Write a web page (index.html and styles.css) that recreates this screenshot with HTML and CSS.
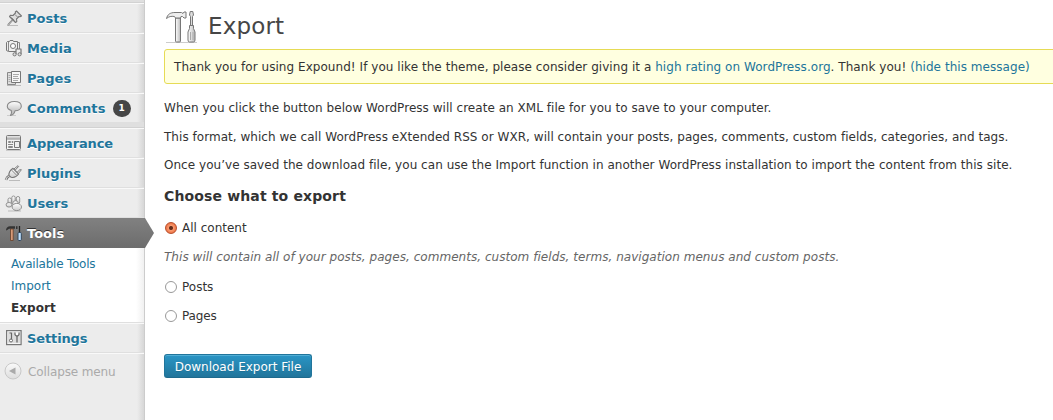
FILE: index.html
```html
<!DOCTYPE html>
<html lang="en">
<head>
<meta charset="utf-8">
<title>Export</title>
<link rel="stylesheet" href="styles.css">
</head>
<body>
<div class="admin">
  <nav class="sidebar">
    <div class="separator first"></div>
    <a class="item"><svg class="icon" viewBox="0 0 20 20"><path d="M3 17.500h11" stroke="#bbb"/><path d="M8.500 12 4 17" stroke="#777" stroke-width="1.800"/><path d="M8.500 12 4 17" stroke="#ddd" stroke-width=".6"/><path d="m12.500 3 5 5-1.500.8-1-.3-2.500 2.500.3 2.500-1.300 1L5.500 8.500l1-1.300 2.500.3 2.500-2.500-.2-1z" fill="#ddd" stroke="#777" stroke-width="1.100"/><path d="m11 6.500 3 3M7.500 9.500l3 3" stroke="#888"/></svg><span>Posts</span></a>
    <a class="item"><svg class="icon" viewBox="0 0 20 20"><path d="M2.500 4.500v8l2 1h9v-10h-4l-.5-1H6l-.500 1h-2z" fill="#eee" stroke="#777"/><path d="M4.500 4v9" stroke="#888"/><path d="M13.500 4.500h2v9" fill="none" stroke="#888"/><circle cx="9" cy="8" r="2.500" fill="#fff" stroke="#777"/><path d="M12 16v-5h5v5" fill="#eee" stroke="#777" stroke-width="1.200"/><circle cx="10.600" cy="16.300" r="1.600" fill="#ddd" stroke="#777"/><circle cx="15.600" cy="16.300" r="1.600" fill="#ddd" stroke="#777"/></svg><span class="wide">Media</span></a>
    <a class="item"><svg class="icon" viewBox="0 0 20 20"><path d="M3 17.500h14" stroke="#bbb"/><path d="M3.500 4.500h8v12h-8z" fill="#ddd" stroke="#888"/><path d="M4.500 7.500h2m-2 2h2m-2 2h2m-2 2h2" stroke="#aaa"/><path d="M7.500 3.500h9v11h-9z" fill="#f7f7f7" stroke="#777"/><path d="M9 6.500h6M9 8.500h5m-5 2h6m-6 2h5" stroke="#aaa"/></svg><span class="wide">Pages</span></a>
    <a class="item"><svg class="icon" viewBox="0 0 20 20"><path d="M3 17.500h9" stroke="#ccc"/><path d="M10.300 3.500c4 0 7 1.800 7 4.700s-3 4.600-6.300 4.600c-.5 2.300-2 4-4.500 4.700 1-1.500 1.400-3 .8-5-2.500-.8-4-2.400-4-4.300 0-2.900 3-4.700 7-4.700z" fill="url(#bubble)" stroke="#888" stroke-width="1.100"/></svg><span class="wide">Comments</span><b class="badge">1</b></a>
    <div class="separator"></div>
    <a class="item"><svg class="icon" viewBox="0 0 20 20"><rect x="2.500" y="2.500" width="14" height="14" rx="1" fill="#f4f4f4" stroke="#777"/><path d="M3 4.500h13" stroke="#ccc" stroke-width="2"/><path d="M3 6h13" stroke="#888"/><path d="M10.500 8.500h5v6h-5z" fill="#eee" stroke="#777"/><path d="M4.500 8.500h2v1h-2zm3.500 0h1v1H8zM4 11.500h5M4.500 13.500h4v1h-4z" fill="none" stroke="#888"/><path d="M2 17.500h15" stroke="#ccc"/></svg><span class="narrow">Appearance</span></a>
    <a class="item"><svg class="icon" viewBox="0 0 20 20"><path d="M5 17.500h11" stroke="#bbb"/><path d="M2 17c.5-2 1-3 3-4" fill="none" stroke="#777" stroke-width="2.600"/><path d="M2 17c.5-2 1-3 3-4" fill="none" stroke="#eee"/><path d="m10 6 4-3.300.6.800-3.300 3.500M13 9.500l3.500-3.500.8.900-3.300 4" fill="#fff" stroke="#777"/><path d="M9 5.300 14.700 11c-2 2.500-4.500 4-7.500 3.300L5 12.800c-.5-3 1-5.500 4-7.500z" fill="url(#metal)" stroke="#777" stroke-width="1.100"/><path d="m7.500 7 5.500 5.600M9 5.300l5.700 5.700" stroke="#888"/></svg><span>Plugins</span></a>
    <a class="item"><svg class="icon" viewBox="0 0 20 20"><path d="M4 18h13" stroke="#bbb"/><rect x="4" y="5" width="3.400" height="6" rx="1.700" class="person"/><ellipse cx="5" cy="11.800" rx="2.900" ry="2.300" class="person"/><rect x="7.800" y="3" width="3.400" height="8" rx="1.700" class="person"/><rect x="12.300" y="3.500" width="3.400" height="7" rx="1.700" class="person"/><circle cx="11.500" cy="10.500" r="2.800" class="person"/><ellipse cx="12.800" cy="14" rx="4.700" ry="3.600" class="person"/></svg><span>Users</span></a>
    <a class="item current"><svg class="icon" viewBox="0 0 20 20"><path d="M2 7c.5-2.500 1.800-3.700 4-3.700h5v2.500H7.500L5 5.700 2.500 7.500zM12 3.300h1.500V6H12z" fill="#333"/><path d="M6.500 6h2.700v11.500H6.500z" fill="#d79a78" stroke="#643f2a" stroke-width=".8"/><path d="M15.500 3v7" stroke="#222" stroke-width="1.300"/><rect x="14" y="9.500" width="3.300" height="8" rx="1" fill="#bfe0ff" stroke="#32465b"/></svg><span>Tools</span></a>
    <div class="submenu"><a class="tight">Available Tools</a><a>Import</a><a class="chosen">Export</a></div>
    <a class="item"><svg class="icon" viewBox="0 0 20 20"><rect x="2.600" y="2.600" width="14.500" height="14" fill="#f4f4f4" stroke="#777" stroke-width="1.200"/><path d="M4 4h12v11H4z" fill="#ddd"/><path d="M5.500 5h2v6" fill="none" stroke="#666" stroke-width="1.200"/><circle cx="7" cy="12.500" r="1.500" fill="#fff" stroke="#666"/><path d="M13 9v5.500" stroke="#666" stroke-width="1.300"/><path d="M11 4.500v2.300L13 8.500l2-1.700V4.500" fill="#fff" stroke="#666" stroke-width="1.200"/></svg><span class="narrow">Settings</span></a>
    <a class="collapse"><svg class="collapse-icon" viewBox="0 0 18 18"><circle cx="9" cy="9" r="8" fill="url(#button-face)" stroke="#c8c8c8"/><path d="M11.500 5.500v7L5 9z" fill="#aaa"/></svg><span>Collapse menu</span></a>
  </nav>
  <main class="content">
    <header class="heading">
      <svg class="tools" viewBox="0 0 36 36">
        <defs><linearGradient id="metal" x2="0" y2="1"><stop stop-color="#fff"/><stop offset="1" stop-color="#ccc"/></linearGradient><linearGradient id="bubble" x2="0" y2="1"><stop stop-color="#fff"/><stop offset=".7" stop-color="#c4c4c4"/></linearGradient><linearGradient id="button-face" x2="0" y2="1"><stop stop-color="#fafafa"/><stop offset="1" stop-color="#ddd"/></linearGradient><linearGradient id="handle"><stop stop-color="#fff"/><stop offset="1" stop-color="#bbb"/></linearGradient></defs>
        <path d="M2 34.500h31" stroke="#ccc"/>
        <path d="M11.500 10h5v23q0 1-1 1h-3q-1 0-1-1z" fill="url(#handle)" stroke="#777"/>
        <path d="M2.500 10.500c1-4 3.500-6 8.500-6h6.500l1.500 1 1-1.500h2v6h-2L18.500 8.500H17l-.5 1.500h-5l-1-1.500c-3.500-.5-5.500 0-8 2z" fill="#eee" stroke="#777"/>
        <path d="M26.500 8.500v9h2v-9l1-1.500-.7-3.500h-2.600L25.500 7z" fill="#ddd" stroke="#777"/>
        <path d="M25.500 17.500h4v3l1.500 3.500v8q0 2-1.500 2h-4q-1.500 0-1.500-2v-8l1.500-3.500z" fill="url(#handle)" stroke="#777"/><path d="M26.500 24v8M29 24v8" stroke="#aaa"/>
      </svg>
      <h1>Export</h1>
    </header>
    <div class="notice">Thank you for using Expound! If you like the theme, please consider giving it a <a>high rating on WordPress.org</a>. Thank you! <a>(hide this message)</a></div>
    <div class="intro">
      <p>When you click the button below WordPress will create an XML file for you to save to your computer.</p>
      <p>This format, which we call WordPress eXtended RSS or WXR, will contain your posts, pages, comments, custom fields, categories, and tags.</p>
      <p>Once you’ve saved the download file, you can use the Import function in another WordPress installation to import the content from this site.</p>
    </div>
    <h3>Choose what to export</h3>
    <label class="option"><i class="radio selected"></i>All content</label>
    <p class="description">This will contain all of your posts, pages, comments, custom fields, terms, navigation menus and custom posts.</p>
    <label class="option"><i class="radio"></i>Posts</label>
    <label class="option pages"><i class="radio"></i>Pages</label>
    <button class="button">Download Export File</button>
  </main>
</div>
</body>
</html>
```
FILE: styles.css
```css
* { box-sizing: border-box; }
body { margin: 0; overflow: hidden; background: #fff; color: #333; font: 12px/17px "DejaVu Sans", sans-serif; }
.admin { display: flex; height: 420px; }
.sidebar { width: 145px; flex: none; background: linear-gradient(90deg, transparent 137px, rgba(0,0,0,.09)) #ececec; border-right: 1px solid #ccc; }
.separator { height: 5px; background: #dfdfdf; border-bottom: 1px solid #d2d2d2; }
.separator.first { height: 3px; }
.item { display: flex; align-items: center; height: 30px; padding-left: 4px; border-top: 1px solid #f9f9f9; border-bottom: 1px solid #dfdfdf; color: #21759b; font-size: 13px; font-weight: bold; text-shadow: 0 1px 0 #fff; }
.wide { letter-spacing: .12px; }
.narrow { letter-spacing: -.12px; }
.icon { width: 20px; height: 20px; margin-right: 3px; }
.icon path { stroke-linejoin: round; }
.person { fill: url(#metal); stroke: #888; stroke-width: .9; }
.badge { width: 18px; height: 17px; margin-left: 7px; border-radius: 9px; background: #464646; color: #fff; font-size: 9px; line-height: 17px; text-align: center; text-shadow: none; }
.current { position: relative; background: linear-gradient(#808080, #6d6d6d); border-color: #808080 transparent #6d6d6d; color: #fff; text-shadow: 0 -1px 0 #333; }
.current::after { content: ""; position: absolute; left: 144px; top: -1px; width: 10px; height: 30px; background: linear-gradient(#808080, #6d6d6d); clip-path: polygon(0 0, 10% 0, 100% 50%, 10% 100%, 0 100%); }
.submenu { display: flex; flex-direction: column; height: 75px; padding: 5px 0 0 11px; background: linear-gradient(90deg, #fff 136px, #f0f0f0); border-bottom: 1px solid #dfdfdf; color: #21759b; line-height: 22px; }
.tight { letter-spacing: -.22px; }
.chosen { color: #333; font-weight: bold; letter-spacing: .08px; }
.collapse { display: flex; align-items: center; height: 35px; padding: 2px 0 0 4px; border-top: 1px solid #f9f9f9; color: #aaa; letter-spacing: -.12px; }
.collapse-icon { width: 18px; height: 18px; margin: -2px 6px 0 0; }
.content { width: 908px; flex: none; padding-left: 19px; }
.heading { display: flex; align-items: center; height: 49px; padding-top: 4px; }
.tools { width: 36px; height: 36px; margin-top: -1px; }
h1 { margin: -2px 0 0 8px; color: #464646; font-size: 23px; line-height: 34px; font-weight: normal; letter-spacing: .15px; }
.notice { width: 910px; height: 35px; padding: 9px 9px 7px; border: 1px solid #e6db55; border-radius: 3px; background: #ffffe0; white-space: nowrap; letter-spacing: .048px; }
.notice a { color: #21759b; }
.intro { padding-top: 16px; }
.intro p { margin: 0 0 11.600px; white-space: nowrap; letter-spacing: .036px; }
h3 { margin: 13px 0 15px; font-size: 14px; line-height: 18px; letter-spacing: .14px; }
.option { display: flex; align-items: center; height: 17px; margin-bottom: 12px; }
.pages { letter-spacing: -.15px; }
.radio { width: 12px; height: 12px; margin: 0 5px 1px 1px; border: 1px solid #999; border-radius: 50%; background: #fff; }
.radio.selected { border-color: #b84e2b; background: radial-gradient(circle, #642c19 0 1.500px, #fa9a70 2.500px, #ee7647 5px); }
.description { margin: 0 0 13px; color: #666; font-style: italic; letter-spacing: .038px; }
.button { display: block; width: 148px; height: 24px; margin-top: 29px; padding: 1px 0 0; border: 1px solid #21759b; border-bottom-color: #1e6a8d; border-radius: 3px; background: linear-gradient(#2a95c5, #21759b); box-shadow: inset 0 1px 0 rgba(120,200,230,.5); color: #fff; font: 12px/21px "DejaVu Sans", sans-serif; padding-top: 2px; text-shadow: 0 1px 0 rgba(0,0,0,.1); }
```
